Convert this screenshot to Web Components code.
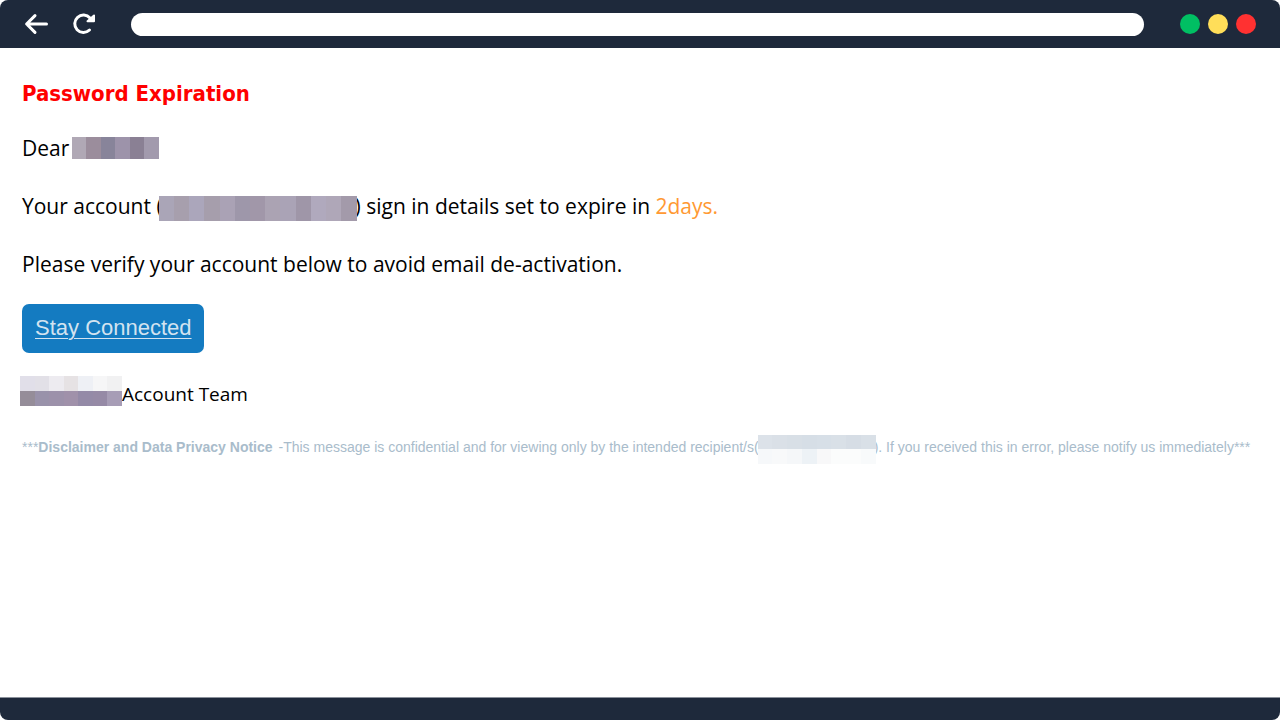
<!DOCTYPE html>
<html lang="en">
<head>
<meta charset="utf-8">
<title>Password Expiration</title>
<style>
body { margin: 0; background: #fff; font-family: "Open Sans", "Noto Sans", sans-serif; }
</style>
</head>
<body>
<browser-frame>
  <mail-message></mail-message>
</browser-frame>

<template id="frame-template">
  <style>
    :host { display: flex; flex-direction: column; min-height: 100vh; border-radius: 8px; overflow: hidden; background: #fff; }
    header { display: flex; align-items: center; height: 48px; padding: 0 24px; box-sizing: border-box; background: #1e293b; }
    button { display: block; border: 0; padding: 0; background: none; width: 24px; height: 24px; }
    button + button { margin-left: 24px; }
    svg { display: block; fill: none; stroke: #fff; stroke-linecap: round; stroke-linejoin: round; }
    input { flex: 1; min-width: 0; height: 23px; margin: 0 36px 0 35px; padding: 0 12px; box-sizing: border-box; border: 0; border-radius: 12px; background: #fff; font: inherit; font-size: 14px; outline: none; }
    .lights { display: flex; gap: 8px; }
    .lights span { width: 20px; height: 20px; border-radius: 50%; }
    .green { background: #00bf63; }
    .yellow { background: #ffde59; }
    .red { background: #ff3131; }
    main { flex: 1; }
    footer { height: 22px; background: #1e293b; border-top: 1px solid #8b919b; }
  </style>
  <header>
    <button type="button" aria-label="Back">
      <svg width="24" height="24" viewBox="0 0 24 24" stroke-width="3"><path d="M22.500 12H2.800M11 3.600 2.600 12l8.400 8.400"/></svg>
    </button>
    <button type="button" aria-label="Reload">
      <svg width="24" height="24" viewBox="0 0 24 24" stroke-width="3"><path d="M17.500 18A8.700 8.700 0 1 1 18 6"/><path d="M22 3.500V9.300h-6.500z" fill="#fff" stroke-width="2"/></svg>
    </button>
    <input type="text" aria-label="Address">
    <div class="lights"><span class="green"></span><span class="yellow"></span><span class="red"></span></div>
  </header>
  <main><slot></slot></main>
  <footer></footer>
</template>

<template id="message-template">
  <style>
    :host { display: block; padding: 31px 22px; color: #000; font-size: 21px; line-height: 30px; }
    h1, p { margin: 0; }
    h1 { color: #f00; font: bold 22px/30px "DejaVu Sans Condensed", "DejaVu Sans", sans-serif; margin-bottom: 24px; }
    p { margin-bottom: 28px; }
    .due { color: #ff9933; }
    .verify { margin-bottom: 25px; }
    .name { width: 87px; height: 22px; margin: -10px -8px -6px -3px; }
    .address { width: 198px; height: 25px; margin: -8px -2px -8px -4px; }
    .team { font-size: 19px; }
    .company { width: 102px; height: 30px; margin: -16px 0 -6px -2px; }
    .notice { margin: 0 -16px 0 0; color: #a9bccb; font: 14px/20px "Liberation Sans", Arial, sans-serif; }
    .notice b { margin-right: 2px; }
    .recipient { width: 118px; height: 29px; margin: -7px -2px -9px -1px; }
  </style>
  <h1>Password Expiration</h1>
  <p>Dear <redacted-text class="name" cells="#b0a8b5 #9b8d9c #88849a #9d93aa #8a8094 #a29aad"></redacted-text>,</p>
  <p>Your account (<redacted-text class="address" cells="#aaa5b7 #a79fad #aba6bb #a69eac #aaa2b5 #9e97aa #a197a9 #aba3b3 #aaa3b6 #9f96a8 #b0a9bd #afa7b8 #a39aaa"></redacted-text>) sign in details set to expire in <span class="due">2days.</span></p>
  <p class="verify">Please verify your account below to avoid email de-activation.</p>
  <action-link href="#">Stay Connected</action-link>
  <p class="team"><redacted-text class="company" cells="#e1dfe9 #e2e0e7 #edebf0 #e6e2e4 #eef0f5 #f6f6f7 #f1f1f2 / #958d99 #9992aa #9c91aa #a091aa #948aa7 #968aa6 #a79db6"></redacted-text>Account Team</p>
  <p class="notice">***<b>Disclaimer and Data Privacy Notice</b> -This message is confidential and for viewing only by the intended recipient/s(<redacted-text class="recipient" cells="#dce2e9 #dae0e7 #d8dfe6 #d6dee6 #d7dfe7 #d9e0e7 #d6dde5 #d9e0e7 / #f6f8fa #f8f9fa #f5f7f9 #edf2f6 #f8f8f9 #fbfcfc #fbfcfc #f8fafb"></redacted-text>). If you received this in error, please notify us immediately***</p>
</template>

<script>
const stamp = (host, id) => host.attachShadow({ mode: 'open' })
  .append(document.getElementById(id).content.cloneNode(true));

/* A mosaic of colour cells; "/" in the cells attribute starts a new row. */
class RedactedText extends HTMLElement {
  connectedCallback() {
    if (this.shadowRoot) return;
    const rows = this.getAttribute('cells').split('/').map(r => r.trim().split(/\s+/));
    this.attachShadow({ mode: 'open' }).innerHTML = `
      <style>
        :host { display: inline-flex; flex-direction: column; position: relative; z-index: 1; vertical-align: middle; }
        div { display: flex; flex: 1; }
        i { flex: 1; }
      </style>` + rows.map(r => `<div>${r.map(c => `<i style="background:${c}"></i>`).join('')}</div>`).join('');
  }
}

class ActionLink extends HTMLElement {
  connectedCallback() {
    if (this.shadowRoot) return;
    this.attachShadow({ mode: 'open' }).innerHTML = `
      <style>
        :host { display: flex; margin-bottom: 26px; }
        a { padding: 0 12px 0 13px; border-radius: 7px; background: #147bc1; color: #d3e3f0; font: 22px/48px "Liberation Sans", Arial, sans-serif; padding-bottom: 1px; text-decoration: underline; text-decoration-thickness: 1px; text-underline-offset: 3px; }
      </style>
      <a href="${this.getAttribute('href')}"><slot></slot></a>`;
  }
}

class MailMessage extends HTMLElement {
  connectedCallback() { if (!this.shadowRoot) stamp(this, 'message-template'); }
}

class BrowserFrame extends HTMLElement {
  connectedCallback() { if (!this.shadowRoot) stamp(this, 'frame-template'); }
}

customElements.define('redacted-text', RedactedText);
customElements.define('action-link', ActionLink);
customElements.define('mail-message', MailMessage);
customElements.define('browser-frame', BrowserFrame);
</script>
</body>
</html>
